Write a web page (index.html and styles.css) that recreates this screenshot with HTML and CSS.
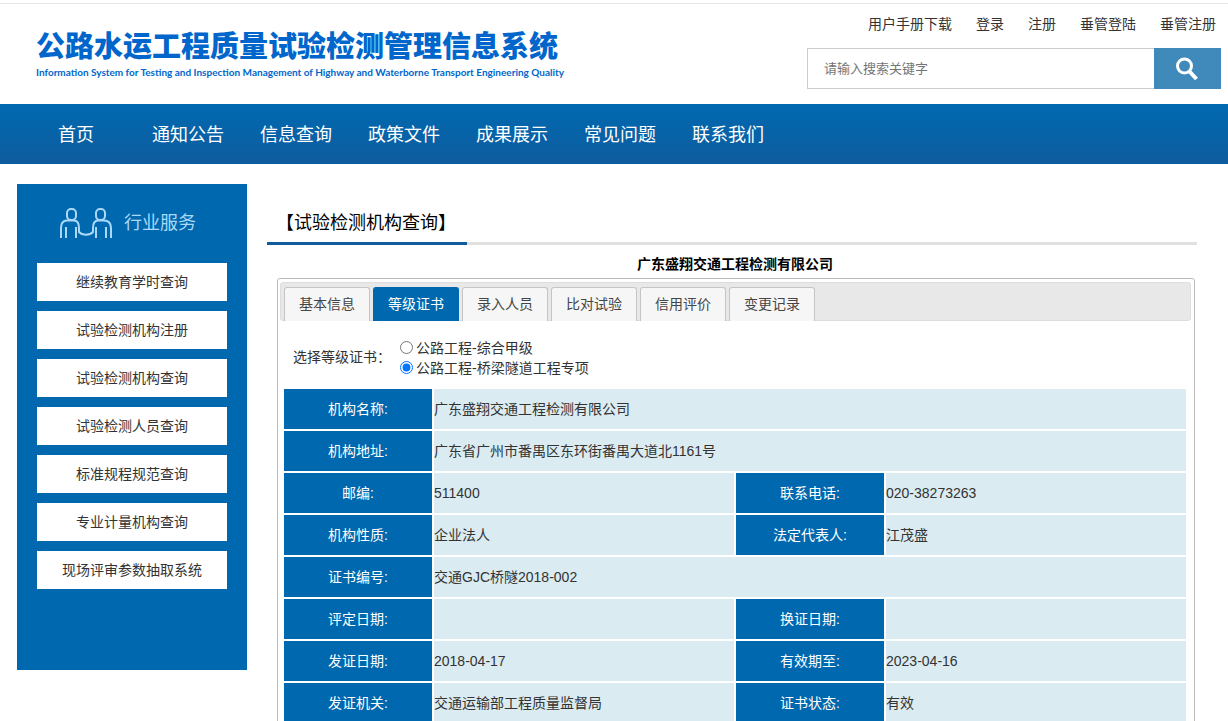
FILE: index.html
```html
<!DOCTYPE html>
<html lang="zh-CN">
<head>
<meta charset="utf-8">
<meta name="viewport" content="width=device-width, initial-scale=1">
<title>公路水运工程质量试验检测管理信息系统</title>
<link rel="stylesheet" href="styles.css">
</head>
<body>
<header class="header">
  <div class="brand">
    <h1 class="brand-name">公路水运工程质量试验检测管理信息系统</h1>
    <p class="brand-sub">Information System for Testing and Inspection Management of Highway and Waterborne Transport Engineering Quality</p>
  </div>
  <div class="tools">
    <div class="links">
      <a href="#">用户手册下载</a>
      <a href="#">登录</a>
      <a href="#">注册</a>
      <a href="#">垂管登陆</a>
      <a href="#">垂管注册</a>
    </div>
    <form class="search">
      <input class="search-input" type="text" placeholder="请输入搜索关键字" aria-label="搜索关键字">
      <button class="search-button" type="button" aria-label="搜索">
        <svg width="26" height="24" viewBox="0 0 26 24" fill="none" stroke="#fff"><circle cx="9.5" cy="9" r="7" stroke-width="3"/><path d="M14.5 14.5L21.5 22" stroke-width="4"/></svg>
      </button>
    </form>
  </div>
</header>
<nav class="nav">
  <a class="nav-home" href="#">首页</a>
  <a href="#">通知公告</a>
  <a href="#">信息查询</a>
  <a href="#">政策文件</a>
  <a href="#">成果展示</a>
  <a href="#">常见问题</a>
  <a href="#">联系我们</a>
</nav>
<div class="page">
  <aside class="sidebar">
    <h2 class="sidebar-title">
      <svg width="54" height="32" viewBox="0 0 54 32" fill="none" stroke="#a9d8f8" stroke-width="2"><rect x="8" y="2" width="9" height="11" rx="4"/><rect x="37" y="2" width="9" height="11" rx="4"/><path d="M2 31V21C2 16 4.500 13.500 8 13.500H15C18.500 13.500 20 17 20 21V25C23 28.500 31 28.500 34 25V21C34 17 35.500 13.500 39 13.500H45C49 13.500 52 16 52 21V31M7 20V31M17 20V31M37 20V31M47 20V31"/></svg>
      <span>行业服务</span>
    </h2>
    <div class="services">
      <a href="#">继续教育学时查询</a>
      <a href="#">试验检测机构注册</a>
      <a href="#">试验检测机构查询</a>
      <a href="#">试验检测人员查询</a>
      <a href="#">标准规程规范查询</a>
      <a href="#">专业计量机构查询</a>
      <a href="#">现场评审参数抽取系统</a>
    </div>
  </aside>
  <main class="content">
    <div class="heading"><h2>【试验检测机构查询】</h2></div>
    <h3 class="company">广东盛翔交通工程检测有限公司</h3>
    <section class="panel">
      <div class="tabs" role="tablist">
        <button type="button" role="tab">基本信息</button>
        <button type="button" role="tab" class="active" aria-selected="true">等级证书</button>
        <button type="button" role="tab">录入人员</button>
        <button type="button" role="tab">比对试验</button>
        <button type="button" role="tab">信用评价</button>
        <button type="button" role="tab">变更记录</button>
      </div>
      <div class="choice" role="radiogroup" aria-labelledby="choice-label">
        <span class="choice-label" id="choice-label">选择等级证书：</span>
        <div>
          <label class="option"><input type="radio" name="cert">公路工程-综合甲级</label>
          <label class="option"><input type="radio" name="cert" checked>公路工程-桥梁隧道工程专项</label>
        </div>
      </div>
      <table class="details">
        <colgroup><col class="col-name"><col><col class="col-name"><col></colgroup>
        <tbody>
        <tr><th>机构名称:</th><td colspan="3">广东盛翔交通工程检测有限公司</td></tr>
        <tr><th>机构地址:</th><td colspan="3">广东省广州市番禺区东环街番禺大道北1161号</td></tr>
        <tr><th>邮编:</th><td>511400</td><th>联系电话:</th><td>020-38273263</td></tr>
        <tr><th>机构性质:</th><td>企业法人</td><th>法定代表人:</th><td>江茂盛</td></tr>
        <tr><th>证书编号:</th><td colspan="3">交通GJC桥隧2018-002</td></tr>
        <tr><th>评定日期:</th><td></td><th>换证日期:</th><td></td></tr>
        <tr><th>发证日期:</th><td>2018-04-17</td><th>有效期至:</th><td>2023-04-16</td></tr>
        <tr><th>发证机关:</th><td>交通运输部工程质量监督局</td><th>证书状态:</th><td>有效</td></tr>
        </tbody>
      </table>
    </section>
  </main>
</div>
</body>
</html>
```
FILE: styles.css
```css
* { box-sizing: border-box; }
body {
  margin: 0;
  background: #fff;
  color: #333;
  font: 14px/20px "Liberation Sans", "Noto Sans CJK SC", sans-serif;
}
h1, h2, h3, p { margin: 0; font-weight: normal; }
a { color: inherit; text-decoration: none; }
button, input { font: inherit; }

.header {
  display: flex;
  justify-content: space-between;
  margin-top: 3px;
  height: 101px;
  padding-right: 7px;
  border-top: 1px solid #e6e6e6;
}
.brand { padding: 21px 0 0 36px; color: #0066cc; white-space: nowrap; }
.brand-name {
  font: 900 29px/38px "Noto Sans CJK SC", sans-serif;
}
.brand-sub { font: bold 10px/18px Lato, sans-serif; }
.tools { width: 414px; padding-top: 10px; }
.links {
  display: flex;
  justify-content: flex-end;
  gap: 24px;
  padding-right: 5px;
}
.search { display: flex; margin-top: 14px; height: 41px; }
.search-input {
  flex: 1;
  min-width: 0;
  padding: 0 16px;
  border: 1px solid #ccc;
  border-right: 0;
  font-size: 13px;
}
.search-input::placeholder { color: #757575; }
.search-button {
  width: 67px;
  padding: 0;
  border: 0;
  background: #4089bb;
}
.search-button svg { display: block; margin: 0 auto; }

.nav {
  display: flex;
  height: 60px;
  padding-left: 18px;
  background: linear-gradient(#0069b0, #0f5c9f);
  color: #fff;
  font-size: 18px;
  line-height: 62px;
}
.nav a { padding: 0 18px; }
.nav .nav-home { padding: 0 40px; }

.page { display: flex; align-items: flex-start; gap: 20px; padding: 20px 31px 0 17px; }
.sidebar {
  flex: none;
  width: 230px;
  padding: 20px 20px 81px;
  background: #0068ae;
}
.sidebar-title {
  display: flex;
  align-items: center;
  gap: 11px;
  height: 38px;
  padding-left: 22px;
  color: #a9d8f8;
  font-size: 18px;
}
.services { display: grid; gap: 10px; margin-top: 21px; }
.services a { background: #fff; line-height: 38px; text-align: center; }

.content { flex: 1; min-width: 0; }
.heading { height: 61px; border-bottom: 3px solid #e1e1e1; }
.heading h2 {
  width: 200px;
  height: 61px;
  padding-left: 9px;
  border-bottom: 3px solid #115b9e;
  color: #000;
  font-size: 18px;
  line-height: 78px;
  white-space: nowrap;
}
.company {
  padding: 6px 0 0 6px;
  color: #000;
  font-size: 14px;
  font-weight: bold;
  line-height: 27px;
  text-align: center;
}
.panel {
  margin: 0 2px 0 10px;
  padding: 3px 3px 3px 2px;
  border: 1px solid #bbb;
  border-radius: 3px;
}
.tabs {
  display: flex;
  gap: 3px;
  height: 39px;
  padding: 4px 3px 0;
  border: 1px solid #ddd;
  border-radius: 3px;
  background: #e8e8e8;
}
.tabs button {
  height: 34px;
  width: 86px;
  padding: 0 0 2px;
  border: 1px solid #c5c5c5;
  border-bottom: 0;
  border-radius: 3px 3px 0 0;
  background: #f6f6f6;
  color: #454545;
}
.tabs .active { background: #0068ae; border-color: #0068ae; color: #fff; }
.choice { display: flex; align-items: center; gap: 9px; padding: 17px 13px 9px; }
.choice-label { padding-bottom: 2px; }
.option { display: flex; align-items: center; gap: 3px; }
.option input { width: 13px; height: 13px; margin: 0 0 2px; }

.details {
  width: 100%;
  padding: 0 3px 0 2px;
  border-spacing: 2px;
  table-layout: fixed;
}
.col-name { width: 148px; }
.details th { height: 40px; padding: 0; background: #0068ae; color: #fff; font-weight: normal; }
.details td { padding: 0; background: #dbebf2; }
```
